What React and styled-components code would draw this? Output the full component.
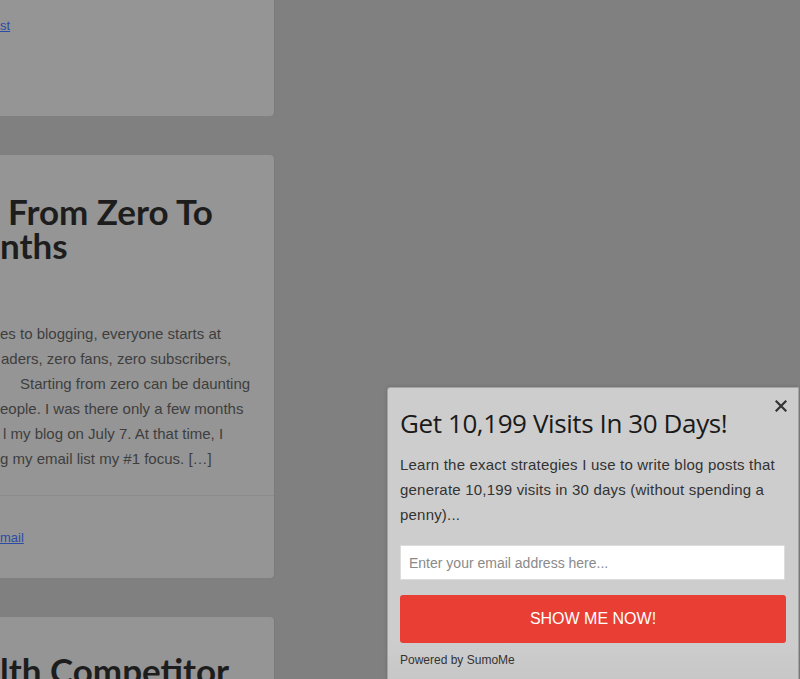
import React from 'react';
import styled, {createGlobalStyle} from 'styled-components';

const GlobalStyle = createGlobalStyle`
  html, body {
    margin: 0;
    padding: 0;
    background: #808080;
    overflow: hidden;
  }
  body {
    width: 800px;
    height: 679px;
    font-family: "Liberation Sans", Arial, sans-serif;
  }
`;

const Page = styled.div`
  position: relative;
  width: 800px;
  height: 679px;
  overflow: hidden;
`;

const Feed = styled.div`
  display: flex;
  flex-direction: column;
  gap: 39px;
  width: 274px;
  margin-top: -10px;
`;

const Card = styled.article`
  background: #959595;
  border-radius: 0 4px 4px 0;
  box-shadow: 1px 0 0 rgba(0, 0, 0, 0.04);
  padding: ${p => p.$pad || '0'};
  height: ${p => p.$height || 'auto'};
  box-sizing: border-box;
  overflow: hidden;
`;

const Title = styled.h2`
  margin: 0;
  font-family: Lato, "Open Sans", sans-serif;
  font-weight: 700;
  font-size: 35px;
  line-height: 34px;
  color: #1d1d1d;
  white-space: nowrap;
`;

const Line = styled.div`
  padding-left: ${p => p.$indent || 0}px;
  white-space: nowrap;
`;

const Excerpt = styled.div`
  margin-top: 59px;
  font-size: 15px;
  line-height: 25px;
  color: #3e3e3e;
`;

const Divider = styled.hr`
  margin: 24px 0 0;
  border: 0;
  border-top: 1px solid #8b8b8b;
`;

const Meta = styled.div`
  padding: ${p => p.$pad || '0'};
  font-size: 13px;
  line-height: 16px;
`;

const Link = styled.a`
  color: #2c4ba6;
  text-decoration: underline;
`;

const Popup = styled.aside`
  position: absolute;
  left: 387px;
  top: 387px;
  width: 412px;
  height: 300px;
  box-sizing: border-box;
  background: linear-gradient(#cdcdcd, #cdcdcd 85%, #c6c6c6);
  border: 1px solid #a4a4a4;
  border-radius: 3px 0 0 0;
  padding: 16px 13px 0 12px;
  box-shadow: 0 0 4px rgba(0, 0, 0, 0.15);
`;

const Close = styled.button`
  position: absolute;
  top: 10px;
  right: 9px;
  border: 0;
  background: none;
  padding: 0;
  width: 16px;
  height: 16px;
  display: flex;
  align-items: center;
  justify-content: center;
  cursor: pointer;
`;

const Heading = styled.h3`
  margin: 0;
  font-family: "Open Sans", sans-serif;
  font-weight: 400;
  font-size: 26px;
  line-height: 38px;
  color: #1a1a1a;
  letter-spacing: -0.4px;
`;

const Blurb = styled.p`
  margin: 10px 0 0;
  font-size: 15px;
  line-height: 25px;
  color: #333;
  letter-spacing: 0.2px;
`;

const EmailInput = styled.input`
  display: block;
  margin-top: 18px;
  width: 385px;
  height: 35px;
  box-sizing: border-box;
  border: 1px solid #dcdcdc;
  background: #fff;
  padding: 0 8px;
  font-family: "Liberation Sans", Arial, sans-serif;
  font-size: 14px;
  color: #333;
  outline: none;
  &::placeholder {
    color: #8a8a8a;
  }
`;

const Submit = styled.button`
  display: block;
  margin-top: 15px;
  width: 386px;
  height: 48px;
  border: 0;
  border-radius: 3px;
  background: #e83e33;
  color: #fff;
  font-family: "Liberation Sans", Arial, sans-serif;
  font-size: 16px;
  cursor: pointer;
`;

const Powered = styled.div`
  margin-top: 10px;
  font-size: 12px;
  color: #333;
`;

const excerpt = [
    ['es to blogging, everyone starts at', 0],
    ['aders, zero fans, zero subscribers,', 1],
    ['Starting from zero can be daunting', 20],
    ['eople. I was there only a few months', 0],
    ['l my blog on July 7. At that time, I', 3],
    ['g my email list my #1 focus. […]', 0],
];

export default function App() {
    return (
        <Page>
            <GlobalStyle/>
            <Feed>
                <Card $pad="28px 0 0" $height="126px">
                    <Meta><Link href="#">st</Link></Meta>
                </Card>
                <Card $pad="39px 0 0" $height="423px">
                    <Title>
                        <Line $indent={8}>From Zero To</Line>
                        <Line>nths</Line>
                    </Title>
                    <Excerpt>
                        {excerpt.map(([text, indent]) => (
                            <Line key={text} $indent={indent}>{text}</Line>
                        ))}
                    </Excerpt>
                    <Divider/>
                    <Meta $pad="34px 0 0"><Link href="#">mail</Link></Meta>
                </Card>
                <Card $pad="36px 0 0" $height="100px">
                    <Title><Line>lth Competitor</Line></Title>
                </Card>
            </Feed>

            <Popup>
                <Close aria-label="Close">
                    <svg width="12" height="12" viewBox="0 0 12 12">
                        <path d="M1.5 1.5l9 9M10.5 1.5l-9 9" stroke="#333" strokeWidth="2.2" strokeLinecap="square"/>
                    </svg>
                </Close>
                <Heading>Get 10,199 Visits In 30 Days!</Heading>
                <Blurb>
                    Learn the exact strategies I use to write blog posts that generate 10,199 visits in 30 days
                    (without spending a penny)...
                </Blurb>
                <EmailInput placeholder="Enter your email address here..."/>
                <Submit>SHOW ME NOW!</Submit>
                <Powered>Powered by SumoMe</Powered>
            </Popup>
        </Page>
    );
}
